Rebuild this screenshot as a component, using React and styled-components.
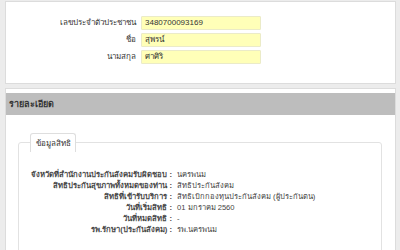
import React from 'react';
import styled, { createGlobalStyle } from 'styled-components';

const GlobalStyle = createGlobalStyle`
  html, body {
    margin: 0;
    padding: 0;
    background: #ececec;
    font-family: Tahoma, "Liberation Sans", "DejaVu Sans", sans-serif;
    overflow: hidden;
  }
`;

const Page = styled.div`
  width: 400px;
  height: 250px;
  padding: 1px 4px 0 5px;
  box-sizing: border-box;
  display: flex;
  flex-direction: column;
  gap: 4px;
  overflow: hidden;
`;

const Panel = styled.div`
  background: #fff;
  border: 1px solid #dcdcdc;
  box-sizing: border-box;
  flex-shrink: 0;
  ${p => p.$height && `height: ${p.$height}px;`}
  ${p => p.$grow && 'flex: 1 0 auto;'}
`;

const Form = styled.div`
  display: grid;
  grid-template-columns: 130px 120px;
  column-gap: 5px;
  row-gap: 3px;
  padding-top: 14px;
`;

const FieldLabel = styled.div`
  text-align: right;
  font-size: 8px;
  color: #333;
  line-height: 14px;
`;

const Input = styled.div`
  height: 14px;
  box-sizing: border-box;
  background: #ffffb8;
  border: 1px solid #ebebc8;
  border-radius: 1px;
  font-size: 8px;
  line-height: 12px;
  padding-left: 3px;
  color: #333;
`;

const Header = styled.div`
  margin-top: 4px;
  height: 22px;
  background: #bdbdbd;
  display: flex;
  align-items: center;
  padding-left: 3px;
  font-size: 9px;
  font-weight: bold;
  color: #333;
`;

const Fieldset = styled.div`
  position: relative;
  margin: 27px 13px 0 12px;
  border: 1px solid #e2e2e2;
  border-radius: 3px 3px 0 0;
  padding: 26px 0 0 0;
  height: 140px;
  box-sizing: border-box;
`;

const Legend = styled.div`
  position: absolute;
  top: -10px;
  left: 11px;
  width: 46px;
  height: 19px;
  box-sizing: border-box;
  border: 1px solid #dedede;
  border-bottom: none;
  border-radius: 3px 3px 0 0;
  background: #fff;
  font-size: 8px;
  color: #333;
  display: flex;
  align-items: center;
  justify-content: center;
`;

const Details = styled.div`
  display: grid;
  grid-template-columns: 153px auto;
  column-gap: 5px;
  row-gap: 0;
`;

const DLabel = styled.div`
  text-align: right;
  font-size: 7.7px;
  font-weight: bold;
  color: #484848;
  line-height: 11px;
  white-space: nowrap;
`;

const DValue = styled.div`
  font-size: 7.6px;
  color: #444;
  line-height: 11px;
  white-space: nowrap;
`;

const fields = [
  ['เลขประจำตัวประชาชน', '3480700093169'],
  ['ชื่อ', 'สุพรน์'],
  ['นามสกุล', 'ศาศิริ'],
];

const details = [
  ['จังหวัดที่สำนักงานประกันสังคมรับผิดชอบ', 'นครพนม'],
  ['สิทธิประกันสุขภาพทั้งหมดของท่าน', 'สิทธิประกันสังคม'],
  ['สิทธิที่เข้ารับบริการ', 'สิทธิเบิกกองทุนประกันสังคม (ผู้ประกันตน)'],
  ['วันที่เริ่มสิทธิ', '01 มกราคม 2560'],
  ['วันที่หมดสิทธิ', '-'],
  ['รพ.รักษา(ประกันสังคม)', 'รพ.นครพนม'],
];

export default function App() {
  return (
    <>
      <GlobalStyle />
      <Page>
        <Panel $height={83}>
          <Form>
            {fields.map(([label, value]) => (
              <React.Fragment key={label}>
                <FieldLabel>{label}</FieldLabel>
                <Input>{value}</Input>
              </React.Fragment>
            ))}
          </Form>
        </Panel>
        <Panel $grow>
          <Header>รายละเอียด</Header>
          <Fieldset>
            <Legend>ข้อมูลสิทธิ</Legend>
            <Details>
              {details.map(([label, value]) => (
                <React.Fragment key={label}>
                  <DLabel>{label} :</DLabel>
                  <DValue>{value}</DValue>
                </React.Fragment>
              ))}
            </Details>
          </Fieldset>
        </Panel>
      </Page>
    </>
  );
}
